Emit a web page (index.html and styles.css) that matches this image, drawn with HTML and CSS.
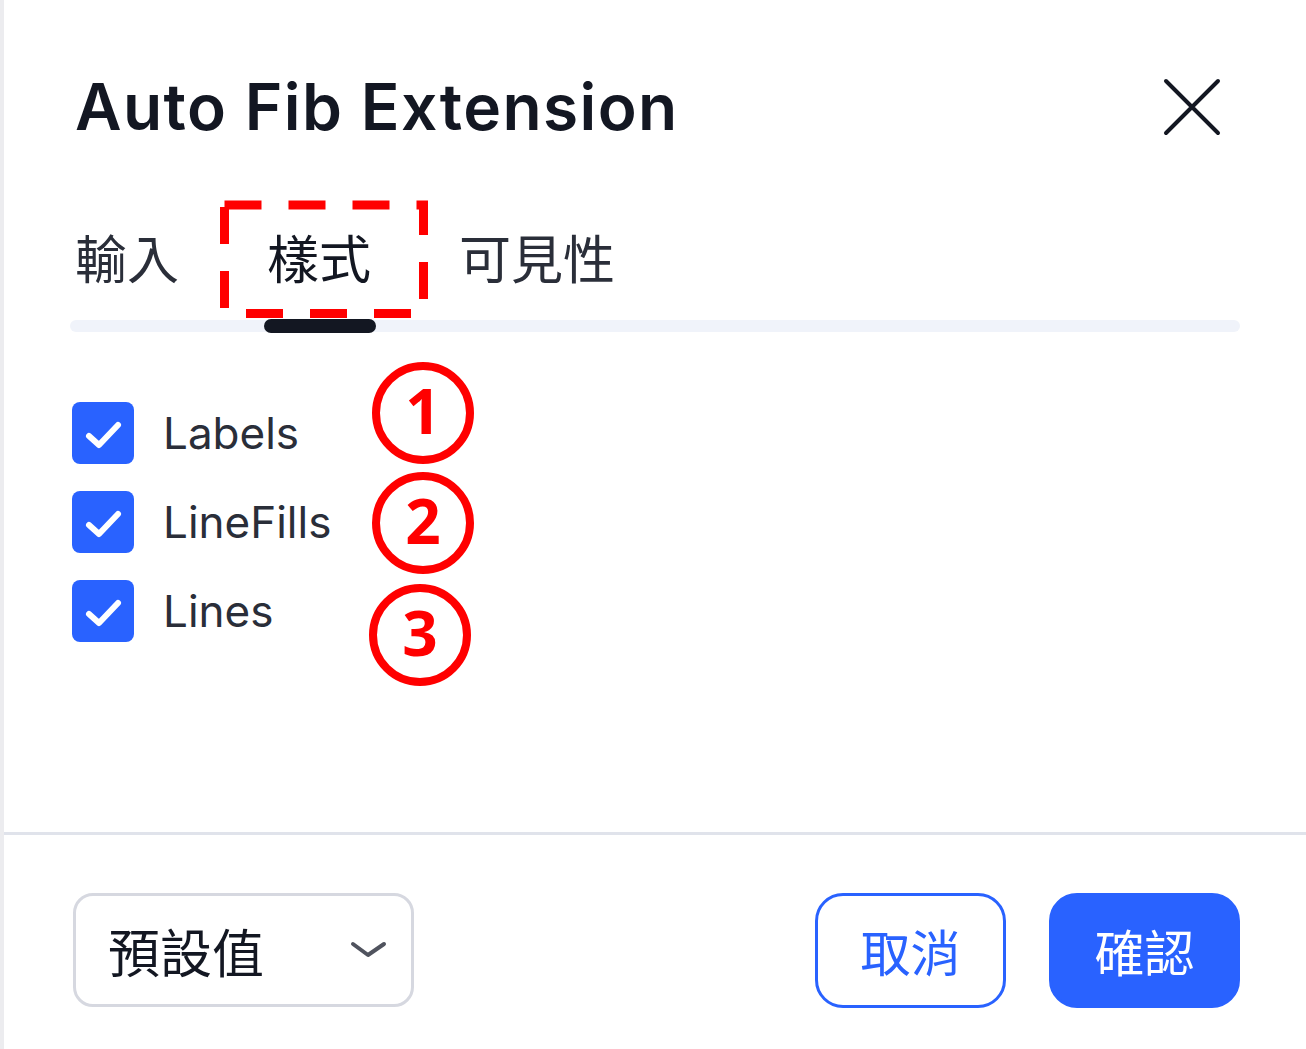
FILE: index.html
```html
<!DOCTYPE html>
<html lang="zh-Hant">
<head>
  <meta charset="UTF-8" />
  <title>Auto Fib Extension</title>
  <link rel="stylesheet" href="styles.css">
</head>
<body>
  <div class="dialog">
    <div class="header">
      <h1 class="title">Auto Fib Extension</h1>
      <button class="close" aria-label="close">
        <svg width="60" height="60" viewBox="0 0 60 60">
          <path d="M4 4 L56 56 M56 4 L4 56" stroke="#131722" stroke-width="4" fill="none" stroke-linecap="round"/>
        </svg>
      </button>
    </div>

    <div class="tabs">
      <div class="tab">輸入</div>
      <div class="tab active">樣式</div>
      <div class="tab">可見性</div>
    </div>
    <div class="track"><div class="indicator"></div></div>

    <div class="content">
      <label class="row">
        <span class="check">
          <svg width="62" height="62" viewBox="0 0 62 62"><path d="M17 34 L27 43 L46 23" stroke="#fff" stroke-width="6" fill="none" stroke-linecap="round" stroke-linejoin="round"/></svg>
        </span>
        <span class="label-text">Labels</span>
      </label>
      <label class="row">
        <span class="check">
          <svg width="62" height="62" viewBox="0 0 62 62"><path d="M17 34 L27 43 L46 23" stroke="#fff" stroke-width="6" fill="none" stroke-linecap="round" stroke-linejoin="round"/></svg>
        </span>
        <span class="label-text">LineFills</span>
      </label>
      <label class="row">
        <span class="check">
          <svg width="62" height="62" viewBox="0 0 62 62"><path d="M17 34 L27 43 L46 23" stroke="#fff" stroke-width="6" fill="none" stroke-linecap="round" stroke-linejoin="round"/></svg>
        </span>
        <span class="label-text">Lines</span>
      </label>
    </div>

    <div class="footer">
      <div class="preset">
        <span>預設值</span>
        <svg width="40" height="24" viewBox="0 0 40 24"><path d="M4 6 L19 17 L35 6" stroke="#50535e" stroke-width="4" fill="none" stroke-linecap="round" stroke-linejoin="round"/></svg>
      </div>
      <div class="actions">
        <button class="btn btn-outline">取消</button>
        <button class="btn btn-primary">確認</button>
      </div>
    </div>

    <!-- annotation marks drawn over the dialog -->
    <svg class="marks" width="1306" height="1049" viewBox="0 0 1306 1049">
      <rect x="224.5" y="205" width="199" height="108.5" fill="none" stroke="#ff0000" stroke-width="9" stroke-dasharray="37 27"/>
      <circle cx="423" cy="413" r="47" fill="none" stroke="#ff0000" stroke-width="8"/>
      <circle cx="423" cy="523" r="47" fill="none" stroke="#ff0000" stroke-width="8"/>
      <circle cx="420" cy="635" r="47" fill="none" stroke="#ff0000" stroke-width="8"/>
      <text x="423" y="434" class="num">1</text>
      <text x="423" y="544" class="num">2</text>
      <text x="420" y="656" class="num">3</text>
    </svg>
  </div>
</body>
</html>
```

FILE: styles.css
```css
html, body {
  margin: 0;
  background: #fff;
}
body {
  font-family: Inter, "Noto Sans CJK TC", sans-serif;
  color: #131722;
}
.dialog {
  position: relative;
  height: 1049px;
  box-sizing: border-box;
  border-left: 4px solid #ececef;
  display: flex;
  flex-direction: column;
}
.header {
  display: flex;
  justify-content: space-between;
  align-items: center;
  padding: 68px 84px 0 71px;
}
.title {
  margin: 0;
  font-size: 64px;
  font-weight: 600;
  line-height: 78px;
  letter-spacing: 1.4px;
}
.close {
  background: none;
  border: none;
  padding: 0;
  width: 60px;
  height: 60px;
  display: flex;
}
.tabs {
  display: flex;
  gap: 88px;
  padding: 0 0 0 71px;
  margin-top: 76px;
}
.tab {
  font-family: "Noto Sans CJK TC", sans-serif;
  font-size: 52px;
  line-height: 70px;
  color: #2a2e39;
}
.tab.active {
  color: #131722;
}
.track {
  margin: 28px 66px 0 66px;
  height: 12px;
  border-radius: 6px;
  background: #f0f3fa;
  position: relative;
}
.indicator {
  position: absolute;
  left: 194px;
  top: -1px;
  width: 112px;
  height: 14px;
  border-radius: 7px;
  background: #131722;
}
.content {
  flex: 1;
  display: flex;
  flex-direction: column;
  gap: 27px;
  padding: 70px 0 0 68px;
}
.row {
  display: flex;
  align-items: center;
  gap: 29px;
}
.check {
  width: 62px;
  height: 62px;
  border-radius: 8px;
  background: #2962ff;
  display: flex;
}
.label-text {
  font-size: 44px;
  color: #2a2e39;
}
.footer {
  border-top: 3px solid #e0e3eb;
  height: 217px;
  box-sizing: border-box;
  display: flex;
  justify-content: space-between;
  align-items: center;
  padding: 16px 66px 0 69px;
}
.preset {
  width: 341px;
  height: 114px;
  box-sizing: border-box;
  border: 3px solid #d6d8e0;
  border-radius: 20px;
  display: flex;
  align-items: center;
  justify-content: space-between;
  padding: 0 22px 0 32px;
  font-family: "Noto Sans CJK TC", sans-serif;
  font-size: 52px;
  color: #131722;
}
.actions {
  display: flex;
  gap: 43px;
}
.btn {
  width: 191px;
  height: 115px;
  box-sizing: border-box;
  border-radius: 28px;
  font-family: "Noto Sans CJK TC", sans-serif;
  font-size: 50px;
  padding: 0;
}
.btn-outline {
  background: #fff;
  border: 3px solid #2962ff;
  color: #2962ff;
}
.btn-primary {
  background: #2962ff;
  border: 3px solid #2962ff;
  color: #fff;
}
.marks {
  position: absolute;
  left: -4px;
  top: 0;
  pointer-events: none;
}
.num {
  font-family: "Noto Sans", sans-serif;
  font-size: 62px;
  font-weight: 700;
  fill: #ff0000;
  text-anchor: middle;
}
```
